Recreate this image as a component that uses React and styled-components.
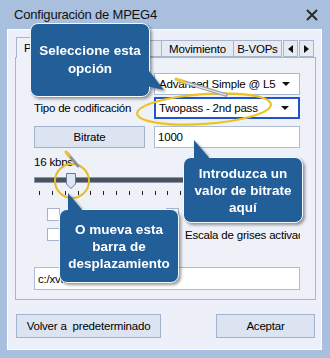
import React from "react"
import styled, { createGlobalStyle } from "styled-components"

const GlobalStyle = createGlobalStyle`
  body {
    margin: 0;
    background: #ffffff;
    font-family: "Liberation Sans", Arial, sans-serif;
  }
`

const Window = styled.div`
  position: relative;
  width: 330px;
  height: 358px;
  box-sizing: border-box;
  padding: 0 8px 8px 7px;
  background: #a9bfde;
  display: flex;
  flex-direction: column;
  font-size: 11.5px;
  color: #000;
  letter-spacing: -0.2px;
  overflow: hidden;
`

const TitleBar = styled.div`
  height: 29px;
  display: flex;
  align-items: center;
  justify-content: space-between;
  padding: 0 4px 0 7px;
  font-size: 13px;
  color: #111;
`

const Client = styled.div`
  flex: 1;
  background: #edf0f8;
  border: 1px solid #fbfcfe;
  padding: 7px 5px 0 7px;
  display: flex;
  flex-direction: column;
`

const TabStrip = styled.div`
  height: 20px;
  display: flex;
  align-items: flex-end;
  position: relative;
  z-index: 1;
`

const Tab = styled.div`
  width: ${p => p.$w}px;
  height: ${p => (p.$active ? 21 : 17)}px;
  margin-bottom: ${p => (p.$active ? -1 : 0)}px;
  box-sizing: border-box;
  border: 1px solid #a7b5cd;
  border-bottom: ${p => (p.$active ? "none" : "1px solid #a7b5cd")};
  margin-left: ${p => (p.$first ? 1 : -1)}px;
  background: ${p => (p.$active ? "#eef1f8" : "#e6eaf3")};
  display: flex;
  align-items: center;
  justify-content: ${p => (p.$active ? "flex-start" : "center")};
  padding-left: ${p => (p.$active ? 7 : 0)}px;
  white-space: nowrap;
  overflow: hidden;
`

const Scroller = styled.div`
  display: flex;
  margin-left: 1px;
  gap: 1px;
`

const ScrollButton = styled.div`
  width: 15px;
  height: 17px;
  box-sizing: border-box;
  border: 1px solid #a7b5cd;
  background: #e6eaf3;
  display: flex;
  align-items: center;
  justify-content: center;
`

const Panel = styled.div`
  height: 243px;
  box-sizing: border-box;
  border: 1px solid #a7b5cd;
  background: #eef1f8;
  padding: 15px 15px 0 18px;
  display: flex;
  flex-direction: column;
`

const FormGrid = styled.div`
  display: grid;
  grid-template-columns: 111px 1fr;
  column-gap: 9px;
  row-gap: 2px;
  align-items: center;
`

const Label = styled.div`
  line-height: 14px;
`

const Select = styled.div`
  height: 22px;
  box-sizing: border-box;
  border: ${p => (p.$focus ? "2px solid #2252cf" : "1px solid #a9b8d3")};
  background: #fff;
  display: flex;
  align-items: center;
  justify-content: space-between;
  padding: 0 9px 0 ${p => (p.$focus ? 3 : 4)}px;
  white-space: nowrap;
`

const Input = styled.div`
  height: ${p => p.$h || 22}px;
  box-sizing: border-box;
  border: 1px solid #adbbd4;
  background: #fff;
  display: flex;
  align-items: center;
  padding-left: 3px;
  white-space: nowrap;
  overflow: hidden;
`

const Button = styled.div`
  height: ${p => p.$h || 22}px;
  width: ${p => (p.$w ? `${p.$w}px` : "auto")};
  box-sizing: border-box;
  border: 1px solid #a3b3cf;
  background: #dce4f1;
  display: flex;
  align-items: center;
  justify-content: center;
  white-space: nowrap;
`

const ButtonRow = styled.div`
  grid-column: 1 / -1;
  display: grid;
  grid-template-columns: 111px 1fr;
  column-gap: 9px;
  margin-top: 5px;
`

const Speed = styled.div`
  margin-top: 7px;
  line-height: 14px;
`

const Slider = styled.div`
  position: relative;
  margin-top: 2px;
  height: 26px;
`

const Track = styled.div`
  position: absolute;
  left: 0;
  right: 0;
  top: 6px;
  height: 6px;
  box-sizing: border-box;
  background: #4a515f;
  border: 1px solid #8d96a8;
`

const Thumb = styled.svg`
  position: absolute;
  left: ${p => p.$pos}px;
  top: 2px;
`

const Ticks = styled.div`
  position: absolute;
  left: 5px;
  right: 3px;
  top: 20px;
  display: flex;
  justify-content: space-between;
`

const Tick = styled.span`
  width: 1px;
  height: 4px;
  background: #1f1f1f;
`

const Checks = styled.div`
  margin-top: 11px;
  display: grid;
  grid-template-columns: 119px 1fr;
  row-gap: 7px;
  padding-left: 13px;
`

const Check = styled.div`
  display: flex;
  align-items: center;
  gap: 6px;
  height: 13px;
  white-space: nowrap;
  overflow: hidden;
`

const Box = styled.span`
  flex: none;
  width: 13px;
  height: 13px;
  box-sizing: border-box;
  border: 1px solid #a5b4cd;
  background: #fff;
`

const PathInput = styled(Input)`
  margin-top: 26px;
`

const Footer = styled.div`
  margin: 14px 1px 0 1px;
  display: flex;
  justify-content: space-between;
`

const Overlay = styled.svg`
  position: absolute;
  left: 0;
  top: 0;
  z-index: 2;
  pointer-events: none;
`

const Callout = styled.div`
  position: absolute;
  z-index: 3;
  left: ${p => p.$x}px;
  top: ${p => p.$y}px;
  width: ${p => p.$w}px;
  height: ${p => p.$h}px;
  box-sizing: border-box;
  background: #225f99;
  border: 1px solid #f4f7fb;
  border-radius: 8px;
  display: flex;
  align-items: center;
  justify-content: center;
  text-align: center;
  color: #fff;
  font-weight: bold;
  font-size: 13.5px;
  line-height: ${p => p.$lh}px;
  letter-spacing: 0;
  filter: drop-shadow(2px 2px 1.5px rgba(0, 0, 0, 0.4));
`

const Tail = styled.svg`
  position: absolute;
  left: -1px;
  top: -1px;
  width: 1px;
  height: 1px;
  overflow: visible;
`

const Arrow = ({ dir }) => (
  <svg width="5" height="8" viewBox="0 0 5 8">
    <path d={dir === "left" ? "M5 0 L0 4 L5 8 Z" : "M0 0 L5 4 L0 8 Z"} fill="#111" />
  </svg>
)

const Caret = () => (
  <svg width="8" height="4" viewBox="0 0 8 4">
    <path d="M0 0 H8 L4 4 Z" fill="#111" />
  </svg>
)

const ticks = Array.from({ length: 21 })

export default function App() {
  return (
    <>
      <GlobalStyle />
      <Window>
        <TitleBar>
          <span>Configuración de MPEG4</span>
          <svg width="12" height="12" viewBox="0 0 12 12">
            <path d="M1 1 L11 11 M11 1 L1 11" stroke="#2a2a2a" strokeWidth="2" />
          </svg>
        </TitleBar>
        <Client>
          <TabStrip>
            <Tab $w={70} $active $first>Perfil/Nivel</Tab>
            <Tab $w={77}>Avanzado</Tab>
            <Tab $w={73}>Movimiento</Tab>
            <Tab $w={49}>B-VOPs</Tab>
            <Scroller>
              <ScrollButton><Arrow dir="left" /></ScrollButton>
              <ScrollButton><Arrow dir="right" /></ScrollButton>
            </Scroller>
          </TabStrip>
          <Panel>
            <FormGrid>
              <Label>Perfil/Nivel</Label>
              <Select>
                <span>Advanced Simple @ L5</span>
                <Caret />
              </Select>
              <Label>Tipo de codificación</Label>
              <Select $focus>
                <span>Twopass - 2nd pass</span>
                <Caret />
              </Select>
              <ButtonRow>
                <Button>Bitrate</Button>
                <Input>1000</Input>
              </ButtonRow>
            </FormGrid>
            <Speed>16 kbps</Speed>
            <Slider>
              <Track />
              <Thumb $pos={32} width="10" height="16" viewBox="0 0 10 16">
                <path d="M0.5 0.5 H9.5 V11 L5 15.5 L0.5 11 Z" fill="#dfe6f2" stroke="#67789a" />
              </Thumb>
              <Ticks>
                {ticks.map((_, i) => <Tick key={i} />)}
              </Ticks>
            </Slider>
            <Checks>
              <Check><Box />Cuarto de píxel</Check>
              <Check><Box />Compensación global</Check>
              <Check><Box />Modo entrelazado</Check>
              <Check><Box />Escala de grises activado</Check>
            </Checks>
            <PathInput $h={23}>c:/xvid.stats</PathInput>
          </Panel>
          <Footer>
            <Button $w={145} $h={24}>Volver a&nbsp; predeterminado</Button>
            <Button $w={99} $h={24}>Aceptar</Button>
          </Footer>
        </Client>

        <Overlay width="330" height="358" viewBox="0 0 330 358">
          <ellipse cx="204" cy="109" rx="67" ry="15" transform="rotate(-4 204 109)" fill="none" stroke="#eec21f" strokeWidth="2.2" />
          <circle cx="72" cy="181" r="17" fill="none" stroke="#e6bb2a" strokeWidth="2" />
          <line x1="181" y1="81" x2="226" y2="95" stroke="#9ea3ab" strokeWidth="3.5" strokeLinecap="round" />
          <line x1="183" y1="82" x2="226" y2="95" stroke="#e9ebef" strokeWidth="1.2" />
          <line x1="176" y1="79" x2="184" y2="82" stroke="#f0c42a" strokeWidth="3" strokeLinecap="round" />
          <line x1="67" y1="153" x2="78" y2="166" stroke="#8d929a" strokeWidth="3" strokeLinecap="round" />
          <line x1="66" y1="152" x2="69" y2="156" stroke="#efc12b" strokeWidth="3" strokeLinecap="round" />
        </Overlay>

        <Callout $x={30} $y={23} $w={120} $h={74} $lh={18}>
          <Tail><polygon points="116,44 134,67 116,63" fill="#225f99" /></Tail>
          Seleccione esta<br />opción
        </Callout>
        <Callout $x={183} $y={157} $w={120} $h={66} $lh={17}>
          <Tail><polygon points="11,-17 11,3 28,3" fill="#225f99" /></Tail>
          Introduzca un<br />valor de bitrate<br />aquí
        </Callout>
        <Callout $x={59} $y={209} $w={120} $h={74} $lh={17}>
          <Tail><polygon points="9,-16 9,3 25,3" fill="#225f99" /></Tail>
          O mueva esta<br />barra de<br />desplazamiento
        </Callout>
      </Window>
    </>
  )
}
